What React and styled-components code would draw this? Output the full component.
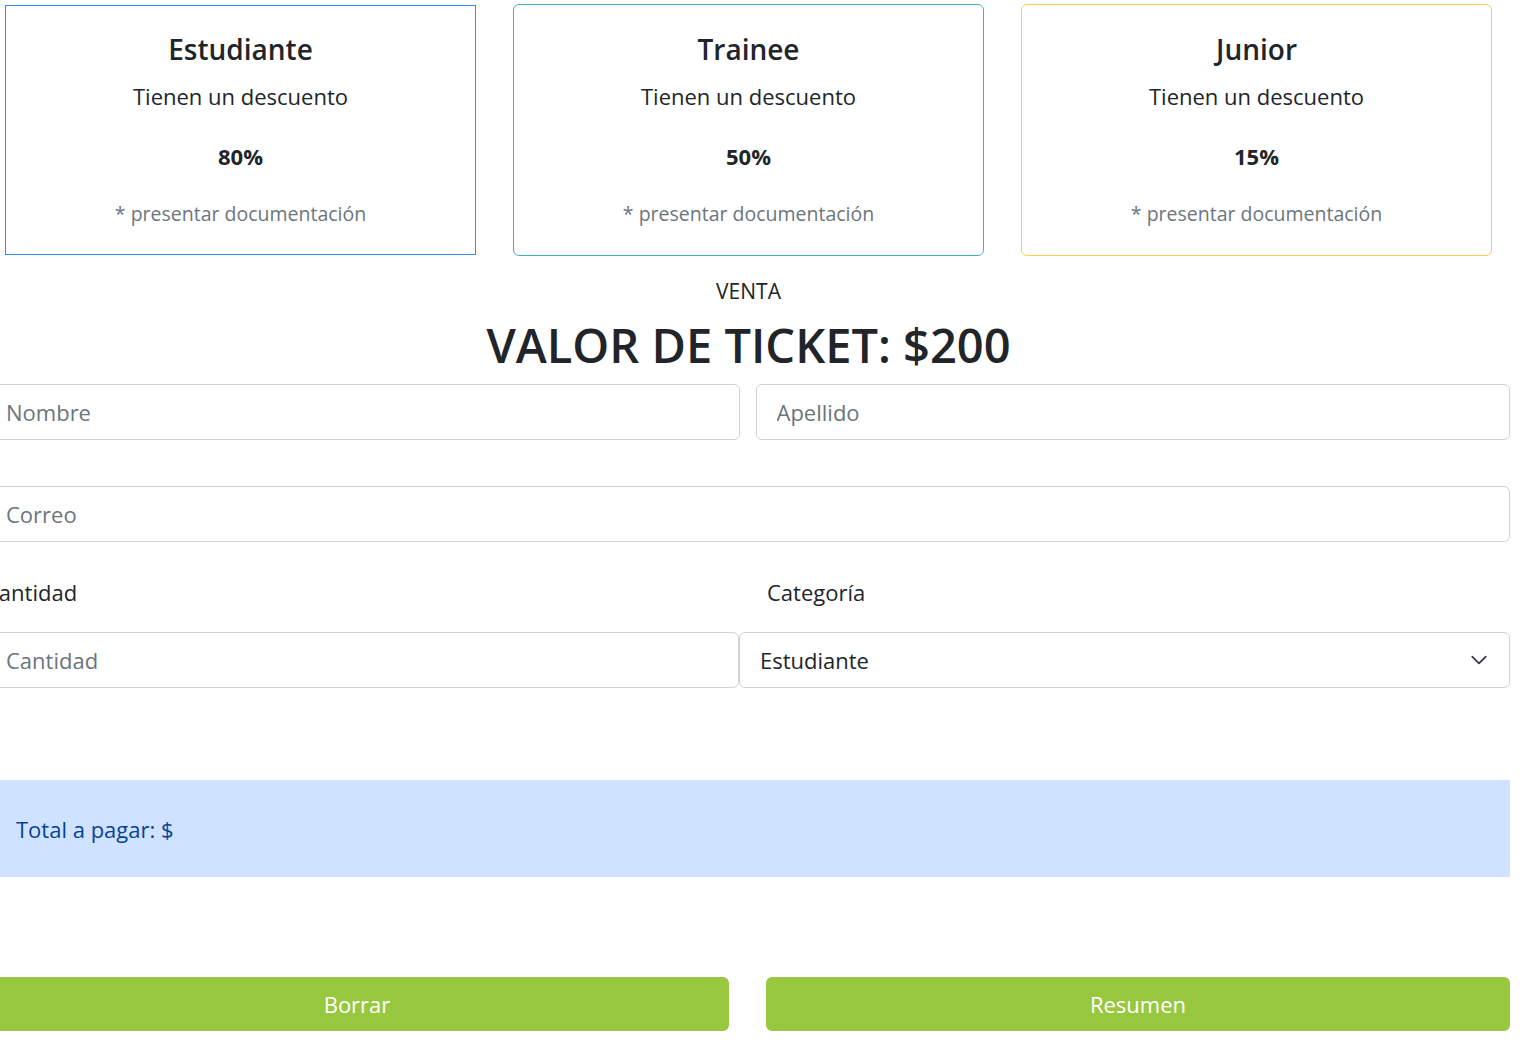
import React from "react";
import styled, { createGlobalStyle } from "styled-components";

const GlobalStyle = createGlobalStyle`
  body {
    margin: 0;
    font-family: "Open Sans", "Noto Sans", sans-serif;
    color: #212529;
    background: #fff;
    overflow-x: hidden;
  }
  * { box-sizing: border-box; }
`;

const plans = [
  { name: "Estudiante", off: "80%", color: "rgb(48, 140, 248)", flat: true },
  { name: "Trainee", off: "50%", color: "rgb(63, 179, 198)" },
  { name: "Junior", off: "15%", color: "rgb(249, 207, 78)" },
];

const App = () => {
  return (
    <Page>
      <GlobalStyle />
      <Cards>
        {plans.map((p) => (
          <Card key={p.name} $color={p.color} $flat={p.flat}>
            <CardTitle>{p.name}</CardTitle>
            <CardText>Tienen un descuento</CardText>
            <Percent>{p.off}</Percent>
            <Note>* presentar documentación</Note>
          </Card>
        ))}
      </Cards>

      <Header>
        <Kicker>VENTA</Kicker>
        <Price>VALOR DE TICKET: $200</Price>
      </Header>

      <Form>
        <TwoCols>
          <Input placeholder="Nombre" />
          <Input placeholder="Apellido" />
        </TwoCols>
        <Input placeholder="Correo" $top="46px" />
        <Pair>
          <Field>
            <Label $indent="0px">Cantidad</Label>
            <Input placeholder="Cantidad" />
          </Field>
          <Field>
            <Label $indent="28px">Categoría</Label>
            <SelectWrap>
              <Select defaultValue="Estudiante">
                <option>Estudiante</option>
                <option>Trainee</option>
                <option>Junior</option>
              </Select>
              <Chevron viewBox="0 0 16 16">
                <path d="m2 5 6 6 6-6" />
              </Chevron>
            </SelectWrap>
          </Field>
        </Pair>
        <Alert>Total a pagar: $</Alert>
        <Buttons>
          <Button>Borrar</Button>
          <Button>Resumen</Button>
        </Buttons>
      </Form>
    </Page>
  );
};

export default App;

const Page = styled.div`
  width: 1510px;
  padding-bottom: 10px;
`;

const Cards = styled.div`
  display: flex;
  align-items: flex-start;
  gap: 37px;
  padding: 4px 0 0 5px;
  width: 1492px;
`;

const Card = styled.div`
  flex: 1;
  height: ${(p) => (p.$flat ? "250px" : "252px")};
  margin-top: ${(p) => (p.$flat ? "1px" : "0")};
  border-width: 1px;
  border-style: solid;
  border-color: ${(p) => p.$color};
  border-radius: ${(p) => (p.$flat ? "0" : "6px")};
  display: flex;
  flex-direction: column;
  align-items: center;
  padding-top: ${(p) => (p.$flat ? "26px" : "27px")};
  text-align: center;
`;

const CardTitle = styled.h5`
  margin: 0;
  font-size: 28px;
  font-weight: 600;
  line-height: 35px;
`;

const CardText = styled.p`
  margin: 13px 0 0;
  font-size: 22px;
  line-height: 33px;
`;

const Percent = styled.p`
  margin: 27px 0 0;
  font-size: 22px;
  font-weight: 700;
  line-height: 33px;
`;

const Note = styled.small`
  margin-top: 26px;
  font-size: 19.5px;
  line-height: 30px;
  color: #6c757d;
`;

const Header = styled.div`
  width: 1497px;
  text-align: center;
  margin-top: 19px;
`;

const Kicker = styled.p`
  margin: 0;
  font-size: 21px;
  line-height: 33px;
`;

const Price = styled.h1`
  margin: 9px 0 0;
  font-size: 47px;
  font-weight: 600;
  line-height: 57px;
`;

const Form = styled.form`
  margin: 10px 0 0 -15px;
  width: 1525px;
  display: flex;
  flex-direction: column;
`;

const TwoCols = styled.div`
  display: grid;
  grid-template-columns: 1fr 1fr;
  gap: 16px;
`;

const Input = styled.input`
  display: block;
  width: 100%;
  height: 56px;
  margin-top: ${(p) => p.$top || "0"};
  padding: 0 20px;
  font-family: inherit;
  font-size: 22px;
  color: #212529;
  background: #fff;
  border: 1px solid #ced4da;
  border-radius: 6px;
  outline: none;
  &::placeholder {
    color: #6c757d;
  }
`;

const Pair = styled.div`
  display: grid;
  grid-template-columns: 754px 1fr;
  margin-top: 34px;
`;

const Field = styled.div`
  display: flex;
  flex-direction: column;
`;

const Label = styled.label`
  padding-left: ${(p) => p.$indent};
  font-size: 22px;
  line-height: 33px;
  margin-bottom: 23px;
`;

const SelectWrap = styled.div`
  position: relative;
`;

const Select = styled.select`
  display: block;
  width: 100%;
  height: 56px;
  padding: 0 60px 0 20px;
  font-family: inherit;
  font-size: 22px;
  color: #212529;
  background: #fff;
  border: 1px solid #ced4da;
  border-radius: 6px;
  appearance: none;
  outline: none;
`;

const Chevron = styled.svg`
  position: absolute;
  right: 22px;
  top: 19px;
  width: 18px;
  height: 18px;
  fill: none;
  stroke: #343a40;
  stroke-width: 1.6;
  stroke-linecap: round;
  stroke-linejoin: round;
  pointer-events: none;
`;

const Alert = styled.div`
  margin-top: 92px;
  height: 97px;
  display: flex;
  align-items: center;
  padding: 0 31px;
  background: #cfe2ff;
  color: #084298;
  font-size: 22px;
`;

const Buttons = styled.div`
  display: grid;
  grid-template-columns: 1fr 1fr;
  gap: 37px;
  margin-top: 100px;
`;

const Button = styled.button`
  height: 54px;
  border: none;
  border-radius: 6px;
  background: #98c83f;
  color: #fff;
  font-family: inherit;
  font-size: 22px;
  cursor: pointer;
`;
